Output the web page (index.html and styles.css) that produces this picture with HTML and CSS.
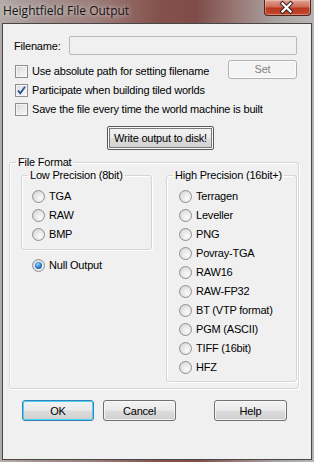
FILE: index.html
```html
<!doctype html>
<html lang="en">
  <head>
    <meta charset="UTF-8" />
    <title>Heightfield File Output</title>
    <link rel="stylesheet" href="styles.css">
  </head>
  <body>
    <div class="window">
      <div class="titlebar">
        <span class="title">Heightfield File Output</span>
        <span class="close-btn">
          <svg width="45" height="15" viewBox="0 0 45 15">
            <path d="M18.5 3.5 L26.5 11.5 M26.5 3.5 L18.5 11.5" stroke="#3b2522" stroke-width="4.2" stroke-linecap="square" fill="none" />
            <path d="M18.5 3.5 L26.5 11.5 M26.5 3.5 L18.5 11.5" stroke="#fff" stroke-width="2.2" stroke-linecap="square" fill="none" />
          </svg>
        </span>
      </div>

      <div class="client">
        <div class="filename-row">
          <span>Filename:</span>
          <span class="textbox"></span>
        </div>

        <div class="check-row">
          <span class="check"></span>
          <span>Use absolute path for setting filename</span>
          <span class="btn btn-set">Set</span>
        </div>
        <div class="check-row">
          <span class="check checked">
            <svg width="11" height="11" viewBox="0 0 11 11">
              <path d="M2 5.5 L4.3 8.3 L9 1.8" stroke="#2c4c94" stroke-width="1.8" fill="none" />
            </svg>
          </span>
          <span>Participate when building tiled worlds</span>
        </div>
        <div class="check-row">
          <span class="check"></span>
          <span>Save the file every time the world machine is built</span>
        </div>

        <span class="btn btn-write">Write output to disk!</span>

        <fieldset class="group group-format">
          <legend>File Format</legend>
          <div class="format-body">
            <div class="low-col">
              <fieldset class="group group-low">
                <legend>Low Precision (8bit)</legend>
                <div class="radio-list">
                  <div class="radio-row"><span class="radio"></span>TGA</div>
                  <div class="radio-row"><span class="radio"></span>RAW</div>
                  <div class="radio-row"><span class="radio"></span>BMP</div>
                </div>
              </fieldset>
              <div class="radio-row null-row"><span class="radio selected"></span>Null Output</div>
            </div>

            <fieldset class="group group-high">
              <legend>High Precision (16bit+)</legend>
              <div class="radio-list">
                <div class="radio-row"><span class="radio"></span>Terragen</div>
                <div class="radio-row"><span class="radio"></span>Leveller</div>
                <div class="radio-row"><span class="radio"></span>PNG</div>
                <div class="radio-row"><span class="radio"></span>Povray-TGA</div>
                <div class="radio-row"><span class="radio"></span>RAW16</div>
                <div class="radio-row"><span class="radio"></span>RAW-FP32</div>
                <div class="radio-row"><span class="radio"></span>BT (VTP format)</div>
                <div class="radio-row"><span class="radio"></span>PGM (ASCII)</div>
                <div class="radio-row"><span class="radio"></span>TIFF (16bit)</div>
                <div class="radio-row"><span class="radio"></span>HFZ</div>
              </div>
            </fieldset>
          </div>
        </fieldset>

        <div class="btn-row">
          <span class="btn btn-ok">OK</span>
          <span class="btn btn-cancel">Cancel</span>
          <span class="btn btn-help">Help</span>
        </div>
      </div>
    </div>
  </body>
</html>
```

FILE: styles.css
```css
body {
  margin: 0;
  font-family: 'Liberation Sans', Arial, sans-serif;
  font-size: 11px;
  letter-spacing: -0.2px;
  color: #000;
}
.window {
  width: 314px;
  height: 462px;
  display: flex;
  flex-direction: column;
  background:
    linear-gradient(90deg, #b3aca9 0%, #a39290 12%, #9b7d79 30%, #85524d 50%, #7e4b47 62%, #9a7a77 76%, #a8a4a3 88%, #b7b4b3 100%);
}
.titlebar {
  height: 23px;
  display: flex;
  align-items: flex-start;
}
.title {
  margin: 2px 0 0 3px;
  font-family: 'Open Sans', 'Liberation Sans', sans-serif;
  font-size: 12px;
  line-height: 17px;
  letter-spacing: 0;
  color: #141414;
  text-shadow: 0 0 4px rgba(255, 255, 255, 0.6), 0 0 8px rgba(255, 255, 255, 0.5);
}
.close-btn {
  margin-left: auto;
  margin-right: 3px;
  width: 45px;
  height: 15px;
  border: 1px solid #4a2520;
  border-top: none;
  border-radius: 0 0 4px 4px;
  background: linear-gradient(#e0a496 0%, #cf6a55 45%, #b8381f 55%, #c44a30 100%);
  box-shadow: inset 0 0 0 1px rgba(255, 220, 210, 0.4);
}
.close-btn svg {
  display: block;
  margin: 0 -1px;
}
.client {
  flex: 1;
  margin: 0 2px 2px;
  padding-top: 12px;
  border: 1px solid #474747;
  background: #f0f0f0;
  display: flex;
  flex-direction: column;
  align-items: flex-start;
}
.filename-row {
  width: 100%;
  height: 19px;
  box-sizing: border-box;
  padding: 0 14px 0 11px;
  display: flex;
  align-items: center;
}
.textbox {
  margin-left: auto;
  width: 226px;
  height: 17px;
  border: 1px solid #b5b8bc;
  border-radius: 2px;
  background: #f0f0f0;
}
.check-row {
  width: 100%;
  height: 19px;
  box-sizing: border-box;
  padding: 0 14px 0 11px;
  display: flex;
  align-items: flex-start;
  gap: 4px;
  line-height: 13px;
}
.check-row:first-of-type {
  margin-top: 10px;
}
.filename-row + .check-row {
  margin-top: 10px;
}
.check {
  width: 11px;
  height: 11px;
  margin-left: 1px;
  border: 1px solid #8e8f8f;
  background: linear-gradient(135deg, #d6d6d6 0%, #e9e9e9 50%, #fafafa 100%);
  box-shadow: inset 0 0 0 1px #f4f4f4;
}
.check.checked {
  background: linear-gradient(135deg, #d9dde4 0%, #eceef2 60%, #fafafa 100%);
}
.check svg {
  display: block;
}
.btn {
  box-sizing: border-box;
  display: flex;
  align-items: center;
  justify-content: center;
  border: 1px solid #707070;
  border-radius: 3px;
  background: linear-gradient(#f2f2f2 0%, #ebebeb 48%, #dddddd 52%, #cfcfcf 100%);
  box-shadow: inset 0 0 0 1px rgba(255, 255, 255, 0.7);
}
.btn-set {
  margin-left: auto;
  margin-top: -5px;
  width: 69px;
  height: 19px;
  border-color: #adb2b5;
  background: #f4f4f4;
  color: #838383;
}
.btn-write {
  margin: 4px 0 0 104px;
  width: 107px;
  height: 24px;
  border: 1px solid #5a5a5a;
  border-radius: 2px;
  box-shadow: inset 0 0 0 1px #fafafa, inset 0 0 0 2px #7a7a7a;
}
.group {
  margin: 0;
  padding: 0;
  border: 1px solid #d5d5d5;
  border-radius: 3px;
  box-shadow: inset 1px 1px 0 #fff, 1px 1px 0 #fff;
  min-width: 0;
}
.group legend {
  padding: 0 2px;
  margin-left: 6px;
  line-height: 13px;
}
.group-format {
  margin: 6px 0 0 6px;
  width: 290px;
  box-sizing: border-box;
}
.format-body {
  display: flex;
  align-items: flex-start;
  gap: 14px;
  padding: 0 1px 6px 11px;
}
.low-col {
  width: 131px;
}
.group-low,
.group-high {
  width: 131px;
  box-sizing: border-box;
}
.radio-list {
  padding: 8px 0 2px 10px;
}
.group-high .radio-list {
  padding: 8px 0 1px 12px;
}
.radio-row {
  height: 19px;
  display: flex;
  align-items: flex-start;
  gap: 4px;
  line-height: 13px;
}
.null-row {
  margin: 9px 0 0 11px;
}
.radio {
  width: 11px;
  height: 11px;
  border: 1px solid #8e8f8f;
  border-radius: 50%;
  background: radial-gradient(circle at 65% 65%, #fbfbfb 0%, #e8e8e8 45%, #cfcfcf 100%);
  display: flex;
  align-items: center;
  justify-content: center;
}
.radio.selected::after {
  content: '';
  width: 7px;
  height: 7px;
  border-radius: 50%;
  background: radial-gradient(circle at 40% 35%, #a6d6fb 0%, #3b8ed8 40%, #1b5299 80%, #123f7a 100%);
}
.btn-row {
  margin: 11px 0 0 19px;
  display: flex;
}
.btn-ok,
.btn-cancel,
.btn-help {
  width: 72px;
  height: 21px;
}
.btn-ok {
  border-color: #3c7fb1;
  box-shadow: inset 0 0 0 1px #48d3fb;
}
.btn-cancel {
  margin-left: 9px;
  width: 73px;
}
.btn-help {
  margin-left: 38px;
  width: 73px;
}
```
